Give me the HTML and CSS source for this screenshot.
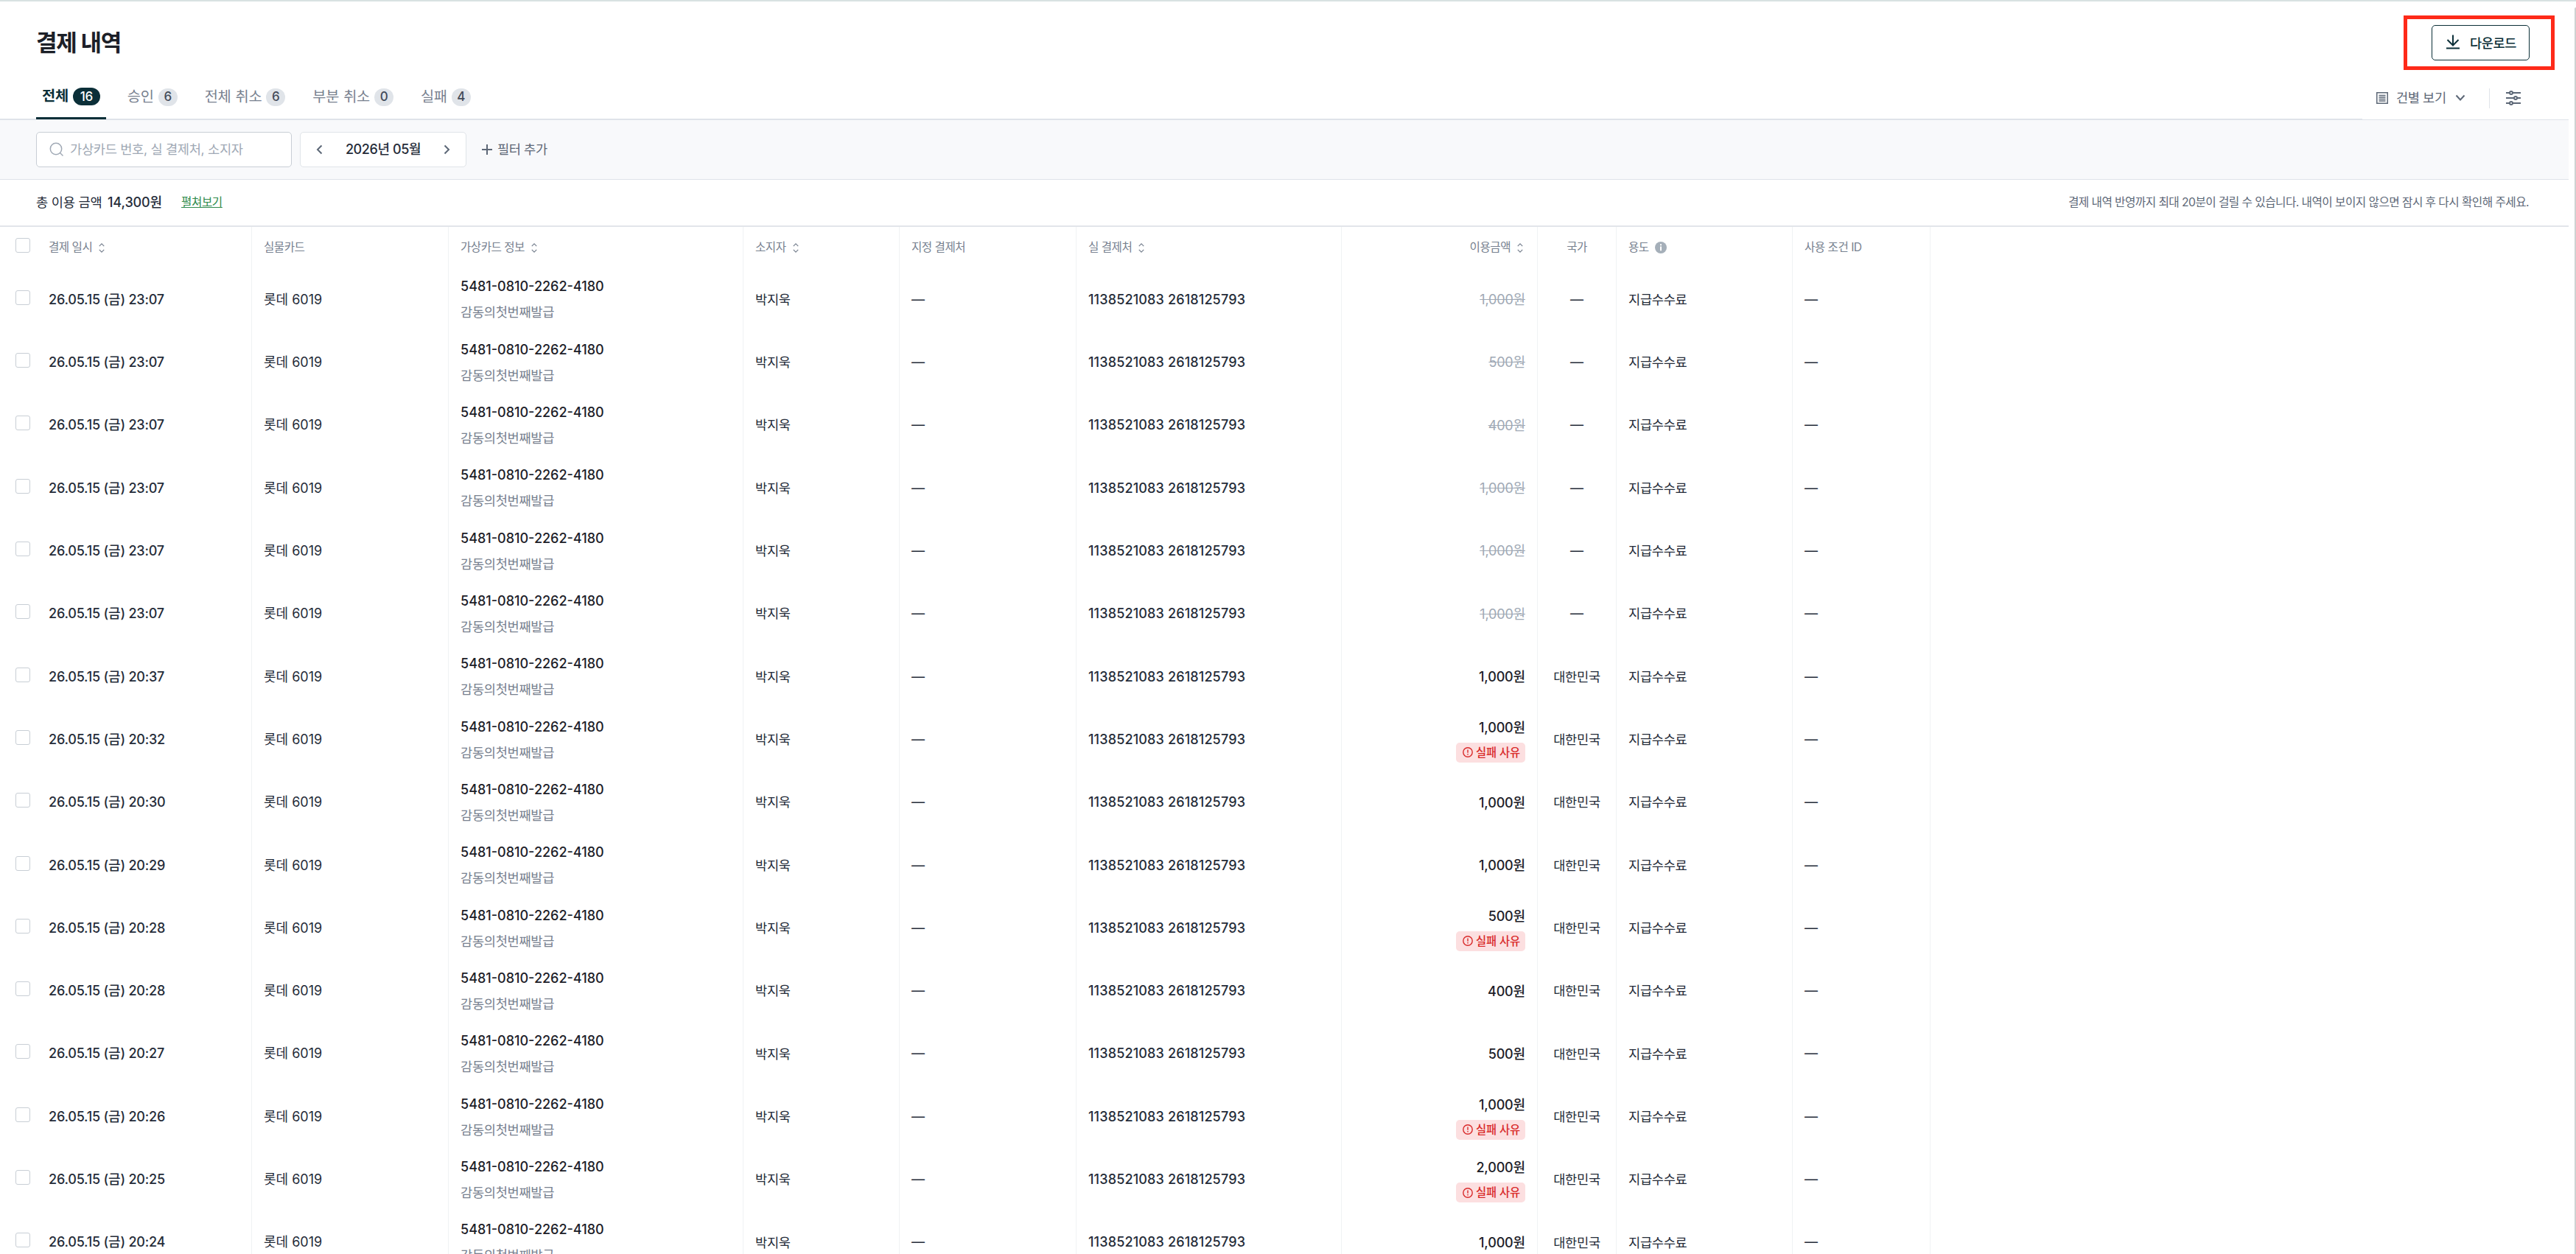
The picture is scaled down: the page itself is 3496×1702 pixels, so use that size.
FILE: index.html
```html
<!DOCTYPE html>
<html lang="ko">
<head>
    <meta charset="UTF-8">
    <meta name="viewport" content="width=device-width, initial-scale=1.0">
    <title>결제 내역</title>
    <link rel="stylesheet" href="styles.css">
</head>

<body>
    <div class="page">
        <header class="page-header">
            <h1>결제 내역</h1>
            <div class="highlight">
                <button type="button" class="download-button">
                    <svg width="20" height="20" viewBox="0 0 20 20" fill="none" stroke="currentColor" stroke-width="2"><path d="M10 0.5V14M2.5 7l7.5 7.5L17.500 7M1 18.500h18"/></svg>
                    <span>다운로드</span>
                </button>
            </div>
        </header>

        <div class="tab-bar">
            <nav class="tabs">
                <a class="tab active">전체<span class="count">16</span></a>
                <a class="tab">승인<span class="count">6</span></a>
                <a class="tab">전체 취소<span class="count">6</span></a>
                <a class="tab">부분 취소<span class="count">0</span></a>
                <a class="tab">실패<span class="count">4</span></a>
            </nav>
            <div class="view-options">
                <svg width="16" height="16" viewBox="0 0 16 16" fill="none" stroke="currentColor" stroke-width="1.5"><path d="M0.750 0.750h14.500v14.500H0.750zM3.500 4.500h9M3.500 7h9M3.500 9.500h9M3.500 12h9"/></svg>
                <span class="view-label">건별 보기</span>
                <svg class="view-arrow" width="14" height="10" viewBox="0 0 14 10" fill="none" stroke="currentColor" stroke-width="2"><path d="M1.500 1.500L7 7.500l5.500-6"/></svg>
                <span class="divider"></span>
                <svg width="20" height="20" viewBox="0 0 20 20" fill="none" stroke="currentColor" stroke-width="2"><path d="M0 3h5M9 3h11M0 10h11M15 10h5M0 17h5M9 17h11"/><circle cx="7" cy="3" r="2"/><circle cx="13" cy="10" r="2"/><circle cx="7" cy="17" r="2"/></svg>
            </div>
        </div>

        <div class="filter-bar">
            <div class="search">
                <svg width="20" height="20" viewBox="0 0 20 20" fill="none" stroke="currentColor" stroke-width="1.5"><circle cx="9" cy="9" r="7.700"/><path d="M14.500 14.500l4 4"/></svg>
                <span>가상카드 번호, 실 결제처, 소지자</span>
            </div>
            <div class="month-picker">
                <svg width="9" height="14" viewBox="0 0 9 14" fill="none" stroke="currentColor" stroke-width="2"><path d="M7.500 1.500L2 7l5.500 5.500"/></svg>
                <span>2026년 05월</span>
                <svg width="9" height="14" viewBox="0 0 9 14" fill="none" stroke="currentColor" stroke-width="2"><path d="M1.500 1.500L7 7l-5.500 5.500"/></svg>
            </div>
            <div class="add-filter">
                <svg width="14" height="14" viewBox="0 0 14 14" fill="none" stroke="currentColor" stroke-width="2"><path d="M7 0v14M0 7h14"/></svg>
                <span>필터 추가</span>
            </div>
        </div>

        <div class="summary">
            <span class="summary-label">총 이용 금액</span>
            <span class="summary-total">14,300원</span>
            <a class="summary-link">펼쳐보기</a>
            <span class="notice">결제 내역 반영까지 최대 20분이 걸릴 수 있습니다. 내역이 보이지 않으면 잠시 후 다시 확인해 주세요.</span>
        </div>

        <div class="table" id="payments">
            <div class="row head">
                <div class="cell check"><span class="checkbox"></span></div>
                <div class="cell">결제 일시<svg class="sort" viewBox="0 0 10 14"><path d="M1.500 4.500L5 1l3.500 3.500M1.500 9.500L5 13l3.500-3.500"/></svg></div>
                <div class="cell">실물카드</div>
                <div class="cell">가상카드 정보<svg class="sort" viewBox="0 0 10 14"><path d="M1.500 4.500L5 1l3.500 3.500M1.500 9.500L5 13l3.500-3.500"/></svg></div>
                <div class="cell">소지자<svg class="sort" viewBox="0 0 10 14"><path d="M1.500 4.500L5 1l3.500 3.500M1.500 9.500L5 13l3.500-3.500"/></svg></div>
                <div class="cell">지정 결제처</div>
                <div class="cell">실 결제처<svg class="sort" viewBox="0 0 10 14"><path d="M1.500 4.500L5 1l3.500 3.500M1.500 9.500L5 13l3.500-3.500"/></svg></div>
                <div class="cell right">이용금액<svg class="sort" viewBox="0 0 10 14"><path d="M1.500 4.500L5 1l3.500 3.500M1.500 9.500L5 13l3.500-3.500"/></svg></div>
                <div class="cell center">국가</div>
                <div class="cell">용도<svg class="info" width="16" height="16" viewBox="0 0 16 16"><circle cx="8" cy="8" r="8" fill="#a5afb9"/><path d="M8 3.200v2M8 6.600v5.600" stroke="#fff" stroke-width="2"/></svg></div>
                <div class="cell">사용 조건 ID</div>
            </div>
        </div>
    </div>

    <script>
        // time, amount, status
        var payments = [
            ["23:07", "1,000", "canceled"],
            ["23:07", "500", "canceled"],
            ["23:07", "400", "canceled"],
            ["23:07", "1,000", "canceled"],
            ["23:07", "1,000", "canceled"],
            ["23:07", "1,000", "canceled"],
            ["20:37", "1,000", "approved"],
            ["20:32", "1,000", "failed"],
            ["20:30", "1,000", "approved"],
            ["20:29", "1,000", "approved"],
            ["20:28", "500", "failed"],
            ["20:28", "400", "approved"],
            ["20:27", "500", "approved"],
            ["20:26", "1,000", "failed"],
            ["20:25", "2,000", "failed"],
            ["20:24", "1,000", "approved"]
        ];

        var failBadge = '<span class="fail-badge"><svg width="14" height="14" viewBox="0 0 14 14" fill="none" stroke="currentColor" stroke-width="1.400"><circle cx="7" cy="7" r="6.200"/><path d="M7 3.500v4.200M7 9v1.500"/></svg>실패 사유</span>';
        var table = document.getElementById("payments");

        payments.forEach(function (payment) {
            var status = payment[2];
            var country = status === "canceled" ? '<span class="dash">—</span>' : '<span class="ko">대한민국</span>';
            var row = document.createElement("div");
            row.className = "row";
            row.innerHTML =
                '<div class="cell check"><span class="checkbox"></span></div>' +
                '<div class="cell date">26.05.15 (금) ' + payment[0] + '</div>' +
                '<div class="cell">롯데 6019</div>' +
                '<div class="cell card"><span class="card-number">5481-0810-2262-4180</span><span class="card-name">감동의첫번째발급</span></div>' +
                '<div class="cell ko">박지욱</div>' +
                '<div class="cell"><span class="dash">—</span></div>' +
                '<div class="cell merchant">1138521083 2618125793</div>' +
                '<div class="cell amount ' + status + '"><span>' + payment[1] + '원</span>' + (status === "failed" ? failBadge : "") + '</div>' +
                '<div class="cell center">' + country + '</div>' +
                '<div class="cell ko">지급수수료</div>' +
                '<div class="cell"><span class="dash">—</span></div>';
            table.appendChild(row);
        });
    </script>
</body>
</html>
```
FILE: styles.css
```css
* {
    box-sizing: border-box;
}

body {
    font-family: Inter, 'Noto Sans CJK KR', sans-serif;
    font-size: 18px;
    font-weight: 400;
    line-height: 1;
    margin: 0;
    height: 100vh;
    overflow: hidden;
    color: #252c39;
    background-color: #fff;
    border-top: 2px solid #d8e2e2;
}

/* Right edge of the scroll area */
body::after {
    content: "";
    position: absolute;
    top: 10px;
    right: 0;
    bottom: 0;
    width: 2px;
    background-color: #cfd2d2;
    border-top-left-radius: 2px;
}

svg {
    flex: none;
    display: block;
}

span, a {
    white-space: nowrap;
}

.page {
    width: 3486px;
}

.page-header {
    display: flex;
    align-items: flex-start;
    justify-content: space-between;
    height: 98px;
    padding: 19px 19px 0 49px;
}

h1 {
    margin: 20px 0 0;
    font-size: 31px;
    font-weight: 700;
    line-height: 34px;
    letter-spacing: -1.3px;
    color: #1c2028;
}

.highlight {
    width: 205px;
    height: 74px;
    padding: 8px 0 0 33px;
    border: 5px solid #fe2a19;
}

.download-button {
    display: flex;
    align-items: center;
    gap: 13px;
    width: 133px;
    height: 48px;
    padding: 0 0 2px 18px;
    border: 1px solid #0b2f38;
    border-radius: 5px;
    background-color: #fff;
    color: #0b2f38;
    font-family: inherit;
    font-size: 17.6px;
    font-weight: 500;
    letter-spacing: -0.4px;
}

/* Tabs */
.tab-bar {
    display: flex;
    justify-content: space-between;
    height: 63px;
    border-bottom: 1px solid #dfe3e9;
}

.tabs {
    display: flex;
    gap: 21px;
    width: 3206px;
    padding-left: 49px;
    border-bottom: 1px solid #dfe3e9;
}

.tab {
    display: flex;
    align-items: center;
    height: 62px;
    padding: 1px 8px 0;
    font-size: 19.8px;
    font-weight: 400;
    letter-spacing: -0.3px;
    word-spacing: 0.8px;
    color: #78818f;
}

.tab.active {
    color: #0b2f38;
    font-weight: 700;
    border-bottom: 3px solid #0b2f38;
    padding-top: 3px;
}

.count {
    display: flex;
    align-items: center;
    justify-content: center;
    width: 26px;
    height: 24px;
    margin-left: 6px;
    border-radius: 12px;
    font-size: 17px;
    font-weight: 500;
    color: #434b59;
    background-color: #e0e4e9;
}

.active .count {
    width: 37px;
    color: #fff;
    background-color: #0b2f38;
}

.view-options {
    display: flex;
    align-items: center;
    width: 261px;
    padding-top: 4px;
    color: #5d6877;
}

.view-label {
    width: 68px;
    margin-left: 11px;
    font-size: 17.6px;
    letter-spacing: -0.4px;
}

.view-arrow {
    margin-left: 12px;
}

.divider {
    width: 1px;
    height: 27px;
    margin: 0 22px 0 32px;
    background-color: #dfe3e9;
}

/* Filters */
.filter-bar {
    display: flex;
    align-items: center;
    height: 81px;
    padding-left: 49px;
    background-color: #f8f9fb;
    border-bottom: 1px solid #dfe3e9;
}

.search {
    display: flex;
    align-items: center;
    gap: 8px;
    width: 347px;
    height: 48px;
    padding-left: 17px;
    border: 1px solid #c8ced5;
    border-radius: 5px;
    background-color: #fff;
    font-size: 17.6px;
    letter-spacing: -0.3px;
    color: #a0a9b5;
}

.month-picker {
    display: flex;
    align-items: center;
    justify-content: space-between;
    width: 226px;
    height: 48px;
    margin-left: 11px;
    padding: 0 21px;
    border: 1px solid #e0e4e9;
    border-radius: 5px;
    background-color: #fff;
    font-weight: 500;
    letter-spacing: -0.4px;
}

.month-picker svg {
    color: #5d6877;
}

.add-filter {
    display: flex;
    align-items: center;
    gap: 7px;
    margin-left: 21px;
    font-size: 17.6px;
    letter-spacing: -0.4px;
    color: #5d6877;
}

/* Total */
.summary {
    display: flex;
    align-items: center;
    height: 64px;
    padding: 0 54px 0 49px;
    border-bottom: 2px solid #e2e5ea;
}

.summary-label {
    width: 97px;
    font-size: 17.6px;
    letter-spacing: -0.2px;
}

.summary-total {
    width: 100px;
    font-weight: 450;
    letter-spacing: -0.1px;
}

.summary-link {
    font-size: 15.6px;
    letter-spacing: -0.4px;
    color: #2f8a4c;
    text-decoration: underline;
}

.notice {
    margin-left: auto;
    font-size: 15.7px;
    letter-spacing: -0.56px;
    color: #5d6877;
}

/* Payment table */
.row {
    display: grid;
    grid-template-columns: 50px 292px 267px 400px 212px 240px 360px 266px 107px 239px 187px;
    height: 85.34px;
}

.row.head {
    height: 55.4px;
    font-size: 15.6px;
    letter-spacing: -0.5px;
    color: #77818f;
}

.cell {
    display: flex;
    align-items: center;
    padding: 1px 16px 0;
    border-right: 1px solid #f0f2f4;
}

.cell.check {
    padding: 0 0 5px 21px;
    border-right: none;
}

.checkbox {
    width: 20px;
    height: 20px;
    border: 1px solid #c8ced5;
    border-radius: 3px;
    background-color: #fff;
}

.cell.center {
    justify-content: center;
}

.cell.right {
    justify-content: flex-end;
    padding-right: 18px;
}

.date {
    font-weight: 450;
    letter-spacing: -0.2px;
}

.merchant {
    font-weight: 450;
    letter-spacing: 0.15px;
}

.ko {
    font-size: 17.6px;
    letter-spacing: -0.3px;
}

.sort {
    width: 10px;
    height: 13px;
    margin-left: 8px;
    fill: none;
    stroke: #77818f;
    stroke-width: 1.3;
}

.info {
    margin-left: 8px;
}

.cell.card {
    flex-direction: column;
    align-items: flex-start;
    justify-content: center;
    gap: 17px;
}

.card-number {
    color: #1c2028;
    font-weight: 450;
}

.card-name {
    font-size: 17.6px;
    letter-spacing: -0.3px;
    color: #78818f;
}

.cell.amount {
    flex-direction: column;
    align-items: flex-end;
    justify-content: center;
    gap: 11px;
    padding-top: 2px;
    color: #1c2028;
    font-weight: 450;
    letter-spacing: -0.15px;
}

.cell.amount.canceled {
    color: #a0a9b5;
    font-weight: 400;
    text-decoration: line-through;
}

.cell.amount.failed {
    padding-top: 7px;
}

.fail-badge {
    display: flex;
    align-items: center;
    gap: 4px;
    width: 94px;
    height: 27px;
    padding-left: 9px;
    border-radius: 5px;
    font-size: 15.4px;
    color: #d92b2b;
    background-color: #fcdfe0;
}
```
